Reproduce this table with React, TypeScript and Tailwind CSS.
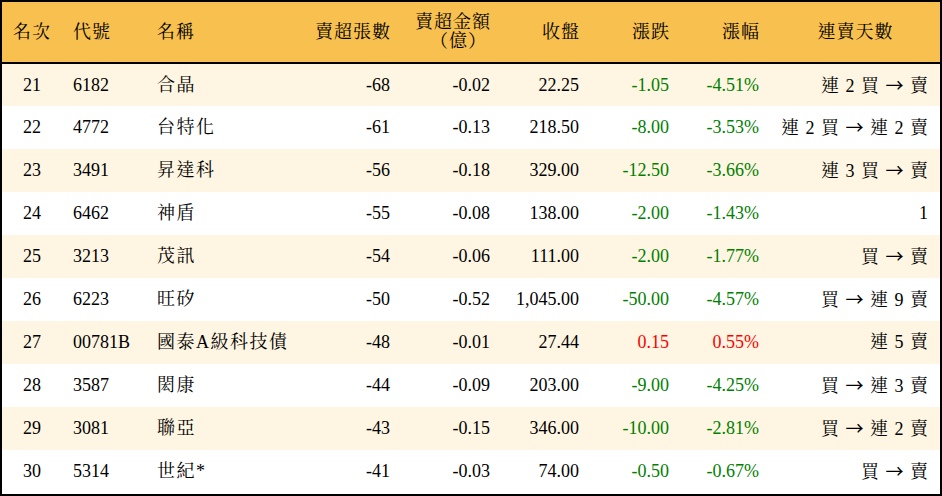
import React from 'react';

interface Row {
  rank: number;
  code: string;
  name: string;
  lots: string;
  amount: string;
  close: string;
  change: string;
  pct: string;
  streak: string;
}

const rows: Row[] = [
  { rank: 21, code: '6182', name: '合晶', lots: '-68', amount: '-0.02', close: '22.25', change: '-1.05', pct: '-4.51%', streak: '連 2 買 → 賣' },
  { rank: 22, code: '4772', name: '台特化', lots: '-61', amount: '-0.13', close: '218.50', change: '-8.00', pct: '-3.53%', streak: '連 2 買 → 連 2 賣' },
  { rank: 23, code: '3491', name: '昇達科', lots: '-56', amount: '-0.18', close: '329.00', change: '-12.50', pct: '-3.66%', streak: '連 3 買 → 賣' },
  { rank: 24, code: '6462', name: '神盾', lots: '-55', amount: '-0.08', close: '138.00', change: '-2.00', pct: '-1.43%', streak: '1' },
  { rank: 25, code: '3213', name: '茂訊', lots: '-54', amount: '-0.06', close: '111.00', change: '-2.00', pct: '-1.77%', streak: '買 → 賣' },
  { rank: 26, code: '6223', name: '旺矽', lots: '-50', amount: '-0.52', close: '1,045.00', change: '-50.00', pct: '-4.57%', streak: '買 → 連 9 賣' },
  { rank: 27, code: '00781B', name: '國泰A級科技債', lots: '-48', amount: '-0.01', close: '27.44', change: '0.15', pct: '0.55%', streak: '連 5 賣' },
  { rank: 28, code: '3587', name: '閎康', lots: '-44', amount: '-0.09', close: '203.00', change: '-9.00', pct: '-4.25%', streak: '買 → 連 3 賣' },
  { rank: 29, code: '3081', name: '聯亞', lots: '-43', amount: '-0.15', close: '346.00', change: '-10.00', pct: '-2.81%', streak: '買 → 連 2 賣' },
  { rank: 30, code: '5314', name: '世紀*', lots: '-41', amount: '-0.03', close: '74.00', change: '-0.50', pct: '-0.67%', streak: '買 → 賣' },
];

// arrow comes from the CJK font so it's full-width like the original
function Streak({ text }: { text: string }) {
  const parts = text.split('→');
  return (
    <>
      {parts.map((p, i) => (
        <React.Fragment key={i}>
          {i > 0 && <span className="font-['Noto_Sans_CJK_TC',sans-serif]">→</span>}
          {p}
        </React.Fragment>
      ))}
    </>
  );
}

export default function App() {
  return (
    <div className="w-[942px] h-[496px] bg-white border-2 border-black font-['Liberation_Serif','Noto_Serif_CJK_TC','Noto_Sans_CJK_TC',serif] text-[18px] text-black overflow-hidden">
      <table className="w-full table-fixed border-collapse">
        <colgroup>
          <col className="w-[60px]" />
          <col className="w-[85px]" />
          <col className="w-[153px]" />
          <col className="w-[100px]" />
          <col className="w-[100px]" />
          <col className="w-[89px]" />
          <col className="w-[90px]" />
          <col className="w-[90px]" />
          <col className="w-[171px]" />
        </colgroup>
        <thead>
          <tr className="bg-[#f8c14f] h-[61px] border-b-2 border-black leading-[19px] tracking-[1px]">
            <th className="font-normal text-center">名次</th>
            <th className="font-normal text-left pl-[11px]">代號</th>
            <th className="font-normal text-left pl-[10px]">名稱</th>
            <th className="font-normal text-right pr-[9px]">賣超張數</th>
            <th className="font-normal text-right pr-[9px]">賣超金額<br /><span className="pr-[4px]">（億）</span></th>
            <th className="font-normal text-right pr-[9px]">收盤</th>
            <th className="font-normal text-right pr-[9px]">漲跌</th>
            <th className="font-normal text-right pr-[9px]">漲幅</th>
            <th className="font-normal text-center pl-[2px]">連賣天數</th>
          </tr>
        </thead>
        <tbody>
          {rows.map((r, i) => {
            const up = !r.change.startsWith('-');
            const color = up ? 'text-[#ff0000]' : 'text-[#008000]';
            return (
              <tr key={r.rank} className={`h-[43px] ${i % 2 === 0 ? 'bg-[#fef5e2]' : 'bg-white'}`}>
                <td className="text-center">{r.rank}</td>
                <td className="text-left pl-[11px]">{r.code}</td>
                <td className="text-left pl-[10px] tracking-[1.5px]">{r.name}</td>
                <td className="text-right pr-[10px]">{r.lots}</td>
                <td className="text-right pr-[10px]">{r.amount}</td>
                <td className="text-right pr-[10px]">{r.close}</td>
                <td className={`text-right pr-[10px] ${color}`}>{r.change}</td>
                <td className={`text-right pr-[10px] ${color}`}>{r.pct}</td>
                <td className="text-right pr-[11px] whitespace-nowrap tracking-[1px]">
                  <Streak text={r.streak} />
                </td>
              </tr>
            );
          })}
        </tbody>
      </table>
    </div>
  );
}
